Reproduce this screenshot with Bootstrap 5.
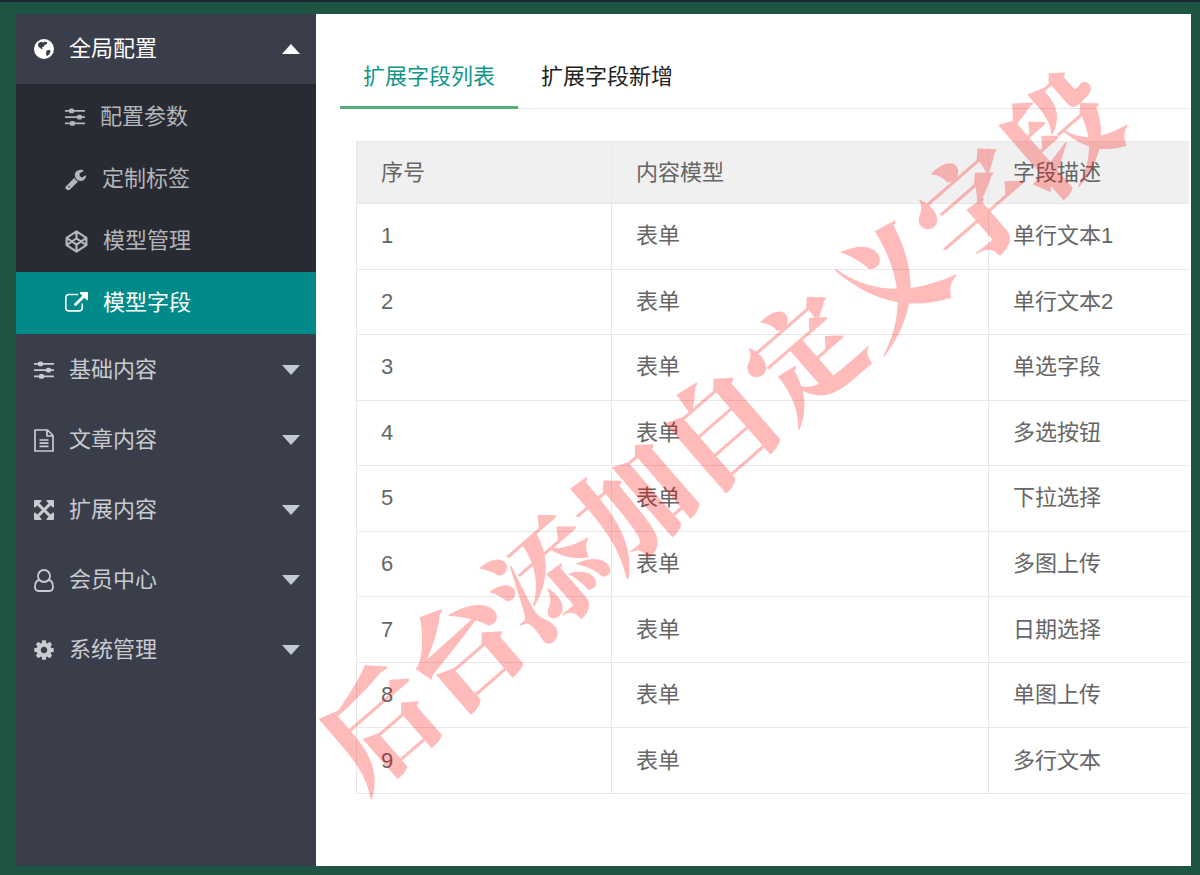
<!DOCTYPE html>
<html lang="zh-CN">
<head>
<meta charset="utf-8">
<meta name="viewport" content="width=device-width, initial-scale=1">
<title>扩展字段列表</title>
<link href="https://cdn.jsdelivr.net/npm/bootstrap@5.3.0/dist/css/bootstrap.min.css" rel="stylesheet">
<style>
  body {
    background: #1e5443;
    border-top: 2px solid #1f242e;
    color: #666;
    font-family: "Liberation Sans", "Noto Sans CJK SC", sans-serif;
    font-size: 22px;
    line-height: 30px;
  }
  .app-frame { padding: 12px 9px 9px 16px; }

  .side-menu {
    width: 300px;
    background: #3a3e4a;
  }
  .menu-head {
    height: 70px;
    padding: 0 16px 0 18px;
    gap: 15px;
    border: 0;
    background: transparent;
    color: #c9cbd1;
  }
  .menu-head[aria-expanded="true"] { color: #fff; }
  .caret {
    border: 9px solid transparent;
    border-bottom-width: 0;
    border-top: 10px solid #c3c9d5;
  }
  [aria-expanded="true"] .caret {
    border-top-width: 0;
    border-bottom: 10px solid #fff;
  }
  .sub-menu { padding-top: 2px; margin-bottom: 1px; background: #282b33; }
  .sub-link {
    height: 62px;
    padding-left: 49px;
    gap: 15px;
    color: #b4b5b9;
    text-decoration: none;
  }
  .sub-link.active { background: #008a8a; color: #fff; }
  .ico { width: 20px; height: 20px; flex: none; fill: currentColor; }
  .ico-md { width: 22px; height: 22px; }
  .ico-lg { width: 23px; height: 23px; }
  .ico-tall { height: 23px; }
  .line-art { fill: none; stroke: currentColor; stroke-width: 2; stroke-linejoin: round; }

  .content-pane { padding: 32px 2px 72px 24px; }
  .field-tabs { border-bottom: 1px solid #e6e6e6; }
  .field-tab {
    padding: 16px 23px 14px;
    margin-bottom: -1px;
    border-bottom: 3px solid transparent;
    color: #222;
    text-decoration: none;
  }
  .field-tab.active { color: #109688; border-bottom-color: #58ac79; }

  .field-table {
    height: 653px;
    margin: 32px 0 0 16px;
    width: calc(100% - 16px);
    table-layout: fixed;
    border-collapse: collapse;
    border-left: 1px solid #e8e8e8;
  }
  .field-table th, .field-table td {
    padding: 0 24px;
    border: 1px solid #e8e8e8;
    border-right: 0;
    font-weight: 400;
    vertical-align: middle;
  }
  .field-table thead { background: #f0f0f0; }
  .field-table thead tr { height: 62px; }
  .col-no { width: 255px; }
  .col-model { width: 377px; }

  .stamp {
    inset: 0;
    padding: 0 76px 32px 0;
    pointer-events: none;
  }
  .stamp-text {
    color: rgba(255, 0, 0, .27);
    font-family: "Noto Serif CJK SC", "Noto Sans CJK SC", serif;
    font-size: 113px;
    font-weight: 900;
    line-height: 1;
    transform: rotate(-41deg);
  }
</style>
</head>
<body class="d-flex flex-column min-vh-100">
<svg class="d-none" aria-hidden="true">
  <symbol id="i-sliders" viewBox="0 0 20 20">
    <path d="M0 3h20v1.800H0zM0 9.200h20V11H0zM0 15.400h20v1.800H0z"/>
    <rect x="4" y="1.500" width="5" height="4.800" rx="1.500"/><rect x="12" y="7.700" width="5" height="4.800" rx="1.500"/><rect x="5" y="13.900" width="5" height="4.800" rx="1.500"/>
  </symbol>
</svg>

<div class="app-frame d-flex flex-grow-1">
  <nav class="side-menu flex-shrink-0" aria-label="后台菜单">
    <button type="button" class="menu-head d-flex align-items-center w-100" aria-expanded="true">
      <svg class="ico" viewBox="0 0 20 20"><path fill-rule="evenodd" d="M10 0a10 10 0 1 0 0 20a10 10 0 0 0 0-20zM4.200 4.500L7 2.800l2.600.8 1.200-1 2.600.8-.6 1.800-2 .5-1 2-1.800.5.8 1.600-1.200.3L5.400 8.600 4 7zM12.400 11.500l3.300-.8.9 1.700-1.500 3-2.200 1.900-.9-2.300z"/></svg>
      <span>全局配置</span><span class="caret ms-auto"></span>
    </button>
    <div class="sub-menu">
      <a href="#" class="sub-link d-flex align-items-center"><svg class="ico"><use href="#i-sliders"/></svg>配置参数</a>
      <a href="#" class="sub-link d-flex align-items-center"><svg class="ico ico-md" viewBox="64 0 1728 1728"><path d="M448 1472q0-26-19-45t-45-19-45 19-19 45 19 45 45 19 45-19 19-45zm644-420l-682 682q-37 37-90 37-52 0-91-37l-106-108q-38-36-38-90 0-53 38-91l681-681q39 98 114.500 173.500t173.500 114.500zm634-435q0 39-23 106-47 134-164.500 217.500t-258.500 83.500q-185 0-316.500-131.500t-131.500-316.500 131.500-316.500 316.500-131.500q58 0 121.500 16.500t107.500 46.500q16 11 16 28t-16 28l-293 169v224l193 107q5-3 79-48.500t135.500-81 70.500-35.500q15 0 23.500 10t8.500 25z"/></svg>定制标签</a>
      <a href="#" class="sub-link d-flex align-items-center"><svg class="ico ico-lg line-art" viewBox="0 0 24 24"><path stroke-width="2.300" d="M12 1.500L22.300 8.200v7.600L12 22.500 1.700 15.800V8.200zM1.700 8.200L12 15.200 22.300 8.200M1.700 15.800L12 8.800 22.300 15.800M12 1.500v7.300M12 15.200v7.300"/></svg>模型管理</a>
      <a href="#" class="sub-link active d-flex align-items-center" aria-current="page"><svg class="ico ico-lg" viewBox="0 0 1792 1792"><path d="M1408 928v320q0 119-84.500 203.500t-203.500 84.500h-832q-119 0-203.500-84.500t-84.500-203.500v-832q0-119 84.500-203.500t203.500-84.500h704q14 0 23 9t9 23v64q0 14-9 23t-23 9h-704q-66 0-113 47t-47 113v832q0 66 47 113t113 47h832q66 0 113-47t47-113v-320q0-14 9-23t23-9h64q14 0 23 9t9 23zm384-864v512q0 26-19 45t-45 19-45-19l-176-176-652 652q-10 10-23 10t-23-10l-114-114q-10-10-10-23t10-23l652-652-176-176q-19-19-19-45t19-45 45-19h512q26 0 45 19t19 45z"/></svg>模型字段</a>
    </div>
    <button type="button" class="menu-head d-flex align-items-center w-100" aria-expanded="false">
      <svg class="ico"><use href="#i-sliders"/></svg>
      <span>基础内容</span><span class="caret ms-auto"></span>
    </button>
    <button type="button" class="menu-head d-flex align-items-center w-100" aria-expanded="false">
      <svg class="ico ico-tall line-art" viewBox="0 0 20 23"><path stroke-width="1.700" d="M1 1h12.500L19 6.500V22H1zM13 1v6h6M5.500 11h9M5.500 14.200h9M5.500 17.400h9"/></svg>
      <span>文章内容</span><span class="caret ms-auto"></span>
    </button>
    <button type="button" class="menu-head d-flex align-items-center w-100" aria-expanded="false">
      <svg class="ico" viewBox="128 128 1536 1536"><path d="M1411 541l-355 355 355 355 144-144q29-31 70-14 39 17 39 59v448q0 26-19 45t-45 19h-448q-42 0-59-40-17-39 14-69l144-144-355-355-355 355 144 144q31 30 14 69-17 40-59 40h-448q-26 0-45-19t-19-45v-448q0-42 40-59 39-17 69 14l144 144 355-355-355-355-144 144q-19 19-45 19-12 0-24-5-40-17-40-59v-448q0-26 19-45t45-19h448q42 0 59 40 17 39-14 69l-144 144 355 355 355-355-144-144q-31-30-14-69 17-40 59-40h448q26 0 45 19t19 45v448q0 42-39 59-13 5-25 5-26 0-45-19z"/></svg>
      <span>扩展内容</span><span class="caret ms-auto"></span>
    </button>
    <button type="button" class="menu-head d-flex align-items-center w-100" aria-expanded="false">
      <svg class="ico ico-tall line-art" viewBox="0 0 20 23"><path stroke-width="1.800" d="M5.500 11C2.500 11.500 1 14 1 17.500 1 20.300 2.300 22 4.500 22h11c2.200 0 3.500-1.700 3.500-4.500 0-3.500-1.500-6-4.500-6.500"/><circle cx="10" cy="7" r="6" stroke-width="1.800"/></svg>
      <span>会员中心</span><span class="caret ms-auto"></span>
    </button>
    <button type="button" class="menu-head d-flex align-items-center w-100" aria-expanded="false">
      <svg class="ico" viewBox="110 110 1572 1572"><path d="M1152 896q0-106-75-181t-181-75-181 75-75 181 75 181 181 75 181-75 75-181zm512-109v222q0 12-8 23t-20 13l-185 28q-19 54-39 91 35 50 107 138 10 12 10 25t-9 23q-27 37-99 108t-94 71q-12 0-26-9l-138-108q-44 23-91 38-16 136-29 186-7 28-36 28h-222q-14 0-24.500-8.500t-11.500-21.500l-28-184q-49-16-90-37l-141 107q-10 9-25 9-14 0-25-11-126-114-165-168-7-10-7-23 0-12 8-23 15-21 51-66.500t54-70.500q-27-50-41-99l-183-27q-13-2-21-12.500t-8-23.500v-222q0-12 8-23t19-13l186-28q14-46 39-92-40-57-107-138-10-12-10-24 0-10 9-23 26-36 98.500-107.500t94.500-71.500q13 0 26 10l138 107q44-23 91-38 16-136 29-186 7-28 36-28h222q14 0 24.500 8.500t11.500 21.500l28 184q49 16 90 37l142-107q9-9 24-9 13 0 25 10 129 119 165 170 7 8 7 22 0 12-8 23-15 21-51 66.500t-54 70.500q26 50 41 98l183 28q13 2 21 12.500t8 23.500z"/></svg>
      <span>系统管理</span><span class="caret ms-auto"></span>
    </button>
  </nav>

  <main class="content-pane position-relative flex-grow-1 bg-white">
    <div class="field-tabs d-flex">
      <a href="#" class="field-tab active" aria-current="page">扩展字段列表</a>
      <a href="#" class="field-tab">扩展字段新增</a>
    </div>
    <table class="field-table">
      <colgroup><col class="col-no"><col class="col-model"><col></colgroup>
      <thead><tr><th scope="col">序号</th><th scope="col">内容模型</th><th scope="col">字段描述</th></tr></thead>
      <tbody>
        <tr><td>1</td><td>表单</td><td>单行文本1</td></tr>
        <tr><td>2</td><td>表单</td><td>单行文本2</td></tr>
        <tr><td>3</td><td>表单</td><td>单选字段</td></tr>
        <tr><td>4</td><td>表单</td><td>多选按钮</td></tr>
        <tr><td>5</td><td>表单</td><td>下拉选择</td></tr>
        <tr><td>6</td><td>表单</td><td>多图上传</td></tr>
        <tr><td>7</td><td>表单</td><td>日期选择</td></tr>
        <tr><td>8</td><td>表单</td><td>单图上传</td></tr>
        <tr><td>9</td><td>表单</td><td>多行文本</td></tr>
      </tbody>
    </table>
    <div class="stamp position-absolute d-flex align-items-center justify-content-center">
      <div class="stamp-text text-nowrap">后台添加自定义字段</div>
    </div>
  </main>
</div>
<script src="https://cdn.jsdelivr.net/npm/bootstrap@5.3.0/dist/js/bootstrap.bundle.min.js"></script>
</body>
</html>
